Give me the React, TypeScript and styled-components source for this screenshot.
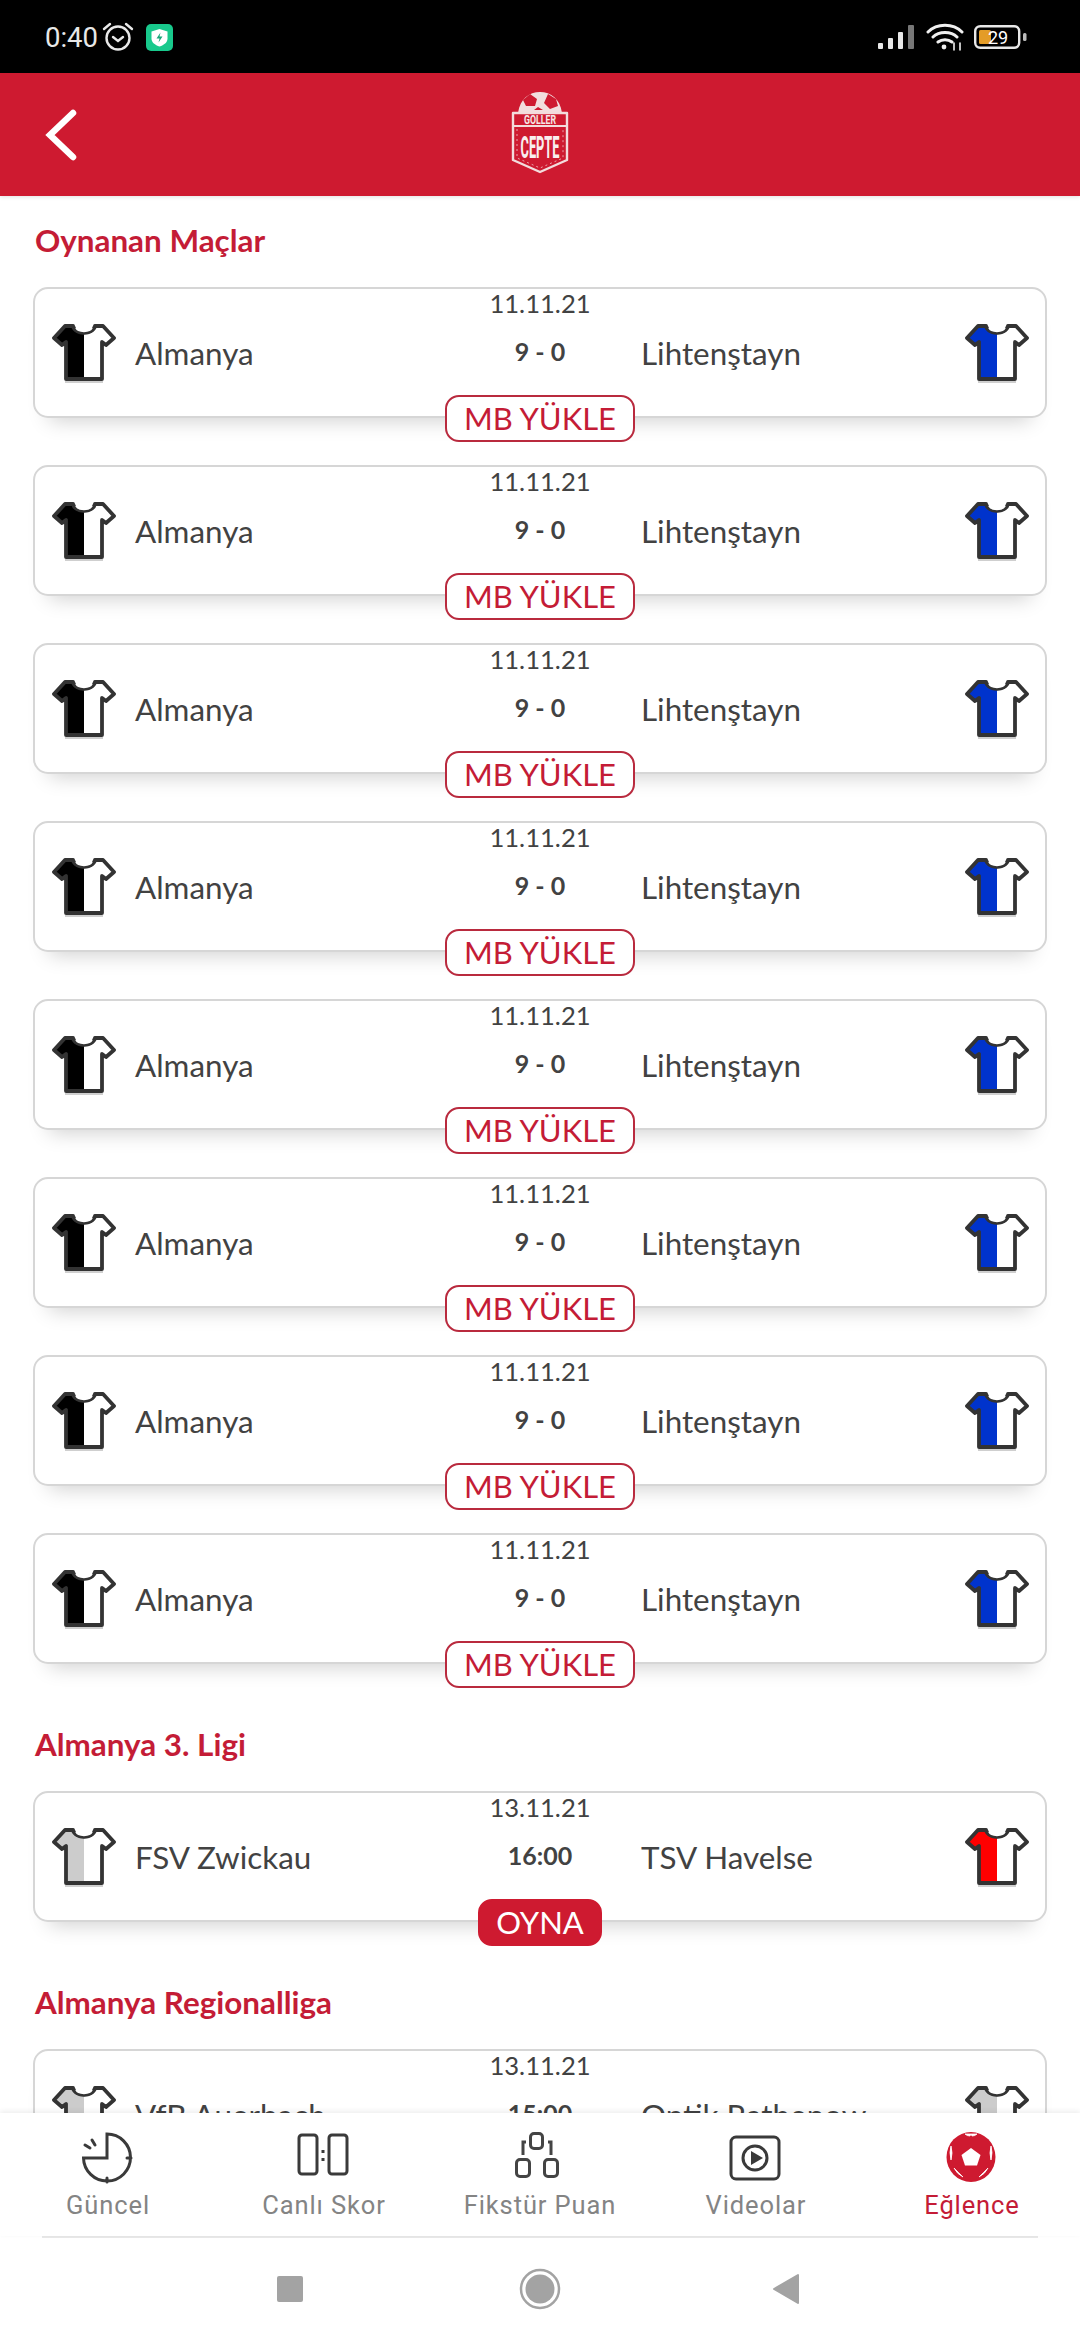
import styled, { createGlobalStyle } from "styled-components"

const RED = "#ce1a30"
const TEXT_RED = "#c41c36"
const TEXT = "#424242"

const GlobalStyle = createGlobalStyle`
	html, body {
		margin: 0;
		padding: 0;
		background: #fff;
	}
	* {
		box-sizing: border-box;
	}
`

const Page = styled.div`
	width: 1080px;
	height: 2340px;
	display: flex;
	flex-direction: column;
	overflow: hidden;
	background: #fff;
	font-family: Lato, "Liberation Sans", sans-serif;
`

const StatusBar = styled.div`
	height: 73px;
	flex: none;
	background: #000;
	display: flex;
	align-items: center;
	padding: 1px 51px 0 45px;
	color: #e8e8e8;
	font-family: Roboto, sans-serif;
	font-size: 27.5px;
`

const StatusLeft = styled.div`
	display: flex;
	align-items: center;
	flex: 1;
`

const StatusTime = styled.span`
	width: 57px;
`

const StatusRight = styled.div`
	display: flex;
	align-items: center;
	gap: 10px;
`

const ShieldBadge = styled.svg`
	margin-left: 12px;
`

const Header = styled.header`
	height: 123px;
	flex: none;
	background: ${RED};
	display: grid;
	grid-template-columns: 1fr auto 1fr;
	align-items: center;
	padding: 0 45px;
	position: relative;
	z-index: 1;
	box-shadow: 0 1px 4px rgba(0, 0, 0, 0.12);
`

const LogoMark = styled.svg`
	margin-bottom: 5px;
`

const Content = styled.main`
	flex: 1;
	min-height: 0;
	overflow: hidden;
	padding: 24px 33px 0;
`

const SectionTitle = styled.h2<{ $first?: boolean }>`
	margin: ${(p) => (p.$first ? "0" : "60px")} 0 27px 2px;
	height: 40px;
	line-height: 40px;
	font-size: 31.4px;
	font-weight: 700;
	color: ${TEXT_RED};
`

const CardList = styled.div`
	display: flex;
	flex-direction: column;
	gap: 47px;
`

const Card = styled.article`
	height: 131px;
	flex: none;
	background: #fff;
	border: 2px solid #d6d6d6;
	border-radius: 15px;
	display: flex;
	flex-direction: column;
	align-items: center;
	box-shadow: 0 18px 20px -16px rgba(0, 0, 0, 0.2);
`

const DateText = styled.div`
	height: 30px;
	line-height: 28px;
	font-size: 25.6px;
	color: ${TEXT};
`

const MatchRow = styled.div`
	width: 100%;
	height: 60px;
	margin-top: 4px;
	flex: none;
	display: grid;
	grid-template-columns: 1fr 202px 1fr;
	align-items: center;
`

const HomeTeam = styled.div`
	display: flex;
	align-items: center;
	gap: 19px;
	padding-left: 17px;
`

const AwayTeam = styled.div`
	display: flex;
	align-items: center;
	justify-content: space-between;
	padding-right: 16px;
`

const TeamName = styled.span`
	font-size: 31.4px;
	line-height: 40px;
	color: ${TEXT};
	white-space: nowrap;
`

const Score = styled.div`
	text-align: center;
	font-size: 25px;
	font-weight: 700;
	margin-bottom: 5px;
	color: ${TEXT};
`

const ActionButton = styled.div<{ $filled?: boolean }>`
	margin-top: 12px;
	margin-bottom: -26px;
	padding-bottom: 2px;
	height: 47px;
	flex: none;
	position: relative;
	display: flex;
	align-items: center;
	justify-content: center;
	border-radius: 14px;
	border: 2px solid ${(p) => (p.$filled ? RED : "#b92a3e")};
	background: ${(p) => (p.$filled ? RED : "#fff")};
	color: ${(p) => (p.$filled ? "#fff" : TEXT_RED)};
	font-size: 31px;
	width: ${(p) => (p.$filled ? "124px" : "190px")};
`

const BottomNav = styled.nav`
	height: 123px;
	flex: none;
	background: #fff;
	position: relative;
	display: grid;
	grid-template-columns: repeat(5, 216px);
	padding-top: 18px;
	box-shadow: 0 -2px 5px rgba(0, 0, 0, 0.07);
`

const NavItem = styled.div<{ $active?: boolean }>`
	display: flex;
	flex-direction: column;
	align-items: center;
	color: ${(p) => (p.$active ? TEXT_RED : "#848484")};
	font-family: Roboto, sans-serif;
	font-size: 25.5px;
	letter-spacing: 0.9px;
`

const NavIcon = styled.svg`
	width: 60px;
	height: 54px;
	flex: none;
	margin-bottom: 5px;
	margin-right: 2px;
`

const SystemBar = styled.div`
	height: 104px;
	flex: none;
	background: #fff;
	display: flex;
	align-items: center;
	justify-content: center;
	gap: 122px;
	margin: 0 42px;
	border-top: 2px solid #e8e8e8;
`

const SysSlot = styled.svg`
	width: 48px;
	height: 44px;
	margin: 0 40px;
`

const JERSEY_PATH = "M21 3H13L2 15l8 7 4-3v37h36V19l4 3 8-7L51 3h-8c-2 9-20 9-22 0Z"

const Jersey = ({ color, id }: { color: string; id: string }) => (
	<svg width="64" height="60" viewBox="0 0 64 60">
		<defs>
			<clipPath id={id}>
				<rect x="0" y="0" width="32" height="60" />
			</clipPath>
		</defs>
		<path d="M13 59h38" stroke="#cfcfcf" strokeWidth="2" />
		<path d={JERSEY_PATH} fill="#fff" />
		<path d={JERSEY_PATH} fill={color} clipPath={`url(#${id})`} />
		<path d={JERSEY_PATH} fill="none" stroke="#333" strokeWidth="3.8" strokeLinejoin="round" />
		<path d="M22 5c3 7 17 7 20 0" fill="#fff" stroke="#333" strokeWidth="2" />
	</svg>
)

const Logo = () => (
	<LogoMark width="60" height="84" viewBox="0 0 60 84">
		<path d="M8 23C10 9 19 2 30 2s20 7 22 21Z" fill="#f2dede" />
		<path d="M20 4l7 5-2 7h-9l-3-6ZM38 4l8 5 2 7-8 3-6-6ZM24 20l4-3 5 3Z" fill={RED} />
		<path d="M3 23h54v47L30 82 3 70Z" fill={RED} stroke="#f3dcdc" strokeWidth="2.4" strokeLinejoin="round" />
		<path d="M3 36h54" stroke="#f3dcdc" strokeWidth="2" />
		<path d="M7 39v29l23 10 23-10V39" fill="none" stroke="#f3dcdc" strokeWidth="1" strokeDasharray="2 3" opacity="0.7" />
		<text x="30" y="34" textAnchor="middle" fontFamily="Roboto, sans-serif" fontWeight="700" fontSize="12" textLength="32" lengthAdjust="spacingAndGlyphs" fill="#f6e6e6">
			GOLLER
		</text>
		<text x="30" y="68" textAnchor="middle" fontFamily="Roboto, sans-serif" fontWeight="700" fontSize="31" textLength="39" lengthAdjust="spacingAndGlyphs" fill="#f9eeee">
			CEPTE
		</text>
	</LogoMark>
)

const played = Array.from({ length: 8 }, (_, i) => i)

type MatchProps = {
	id: string
	date: string
	home: string
	away: string
	center: string
	homeColor: string
	awayColor: string
	filled?: boolean
	label: string
}

const Match = ({ id, date, home, away, center, homeColor, awayColor, filled, label }: MatchProps) => (
	<Card>
		<DateText>{date}</DateText>
		<MatchRow>
			<HomeTeam>
				<Jersey color={homeColor} id={`${id}-h`} />
				<TeamName>{home}</TeamName>
			</HomeTeam>
			<Score>{center}</Score>
			<AwayTeam>
				<TeamName>{away}</TeamName>
				<Jersey color={awayColor} id={`${id}-a`} />
			</AwayTeam>
		</MatchRow>
		<ActionButton $filled={filled}>{label}</ActionButton>
	</Card>
)

const App = () => {
	return (
		<Page>
			<GlobalStyle />
			<StatusBar>
				<StatusLeft>
					<StatusTime>0:40</StatusTime>
					<svg width="32" height="30" viewBox="0 0 32 30" fill="none" stroke="#e8e8e8" strokeWidth="2.4" strokeLinecap="round">
						<circle cx="16" cy="16" r="11.5" />
						<path d="M11 15l5 4 5-4M2 7l6-5M30 7l-6-5" />
					</svg>
					<ShieldBadge width="27" height="27" viewBox="0 0 27 27">
						<rect width="27" height="27" rx="5" fill="#18c98c" />
						<path d="M13.5 5l8 2.5v7c0 4-3.5 6.5-8 8-4.5-1.5-8-4-8-8v-7Z" fill="#fff" />
						<path d="M14.5 8.5l-4 6h3l-1 4 4-6h-3Z" fill="#18a67a" />
					</ShieldBadge>
				</StatusLeft>
				<StatusRight>
					<svg width="38" height="24" viewBox="0 0 38 24" fill="#e8e8e8">
						<rect x="0" y="18" width="5" height="6" rx="1" />
						<rect x="10" y="13" width="5" height="11" rx="1" />
						<rect x="20" y="7" width="5" height="17" rx="1" />
						<rect x="30" y="0" width="6" height="24" rx="1" fill="#777" />
					</svg>
					<svg width="38" height="28" viewBox="0 0 38 28" fill="none" stroke="#f0f0f0" strokeWidth="3" strokeLinecap="round">
						<path d="M2 9c9-9 25-9 34 0M7 14c6-6 18-6 24 0M12 19c4-3 10-3 14 0" />
						<circle cx="18" cy="24" r="2.4" fill="#f0f0f0" stroke="none" />
						<path d="M28 20v7M34 20v7" strokeWidth="1.6" />
					</svg>
					<svg width="55" height="24" viewBox="0 0 55 24">
						<rect x="1.2" y="1.2" width="44" height="21.6" rx="5" fill="none" stroke="#e8e8e8" strokeWidth="2.4" />
						<rect x="5" y="5" width="12" height="14" rx="1.5" fill="#e49c27" />
						<rect x="49" y="8" width="3.5" height="8" rx="1.5" fill="#bbb" />
						<text x="24" y="19" textAnchor="middle" fontFamily="Roboto, sans-serif" fontSize="18" fill="#fff">
							29
						</text>
					</svg>
				</StatusRight>
			</StatusBar>
			<Header>
				<svg width="32" height="52" viewBox="0 0 32 52" fill="none" stroke="#fff" strokeWidth="6.5" strokeLinecap="round">
					<path d="M28 4L5 26l23 22" />
				</svg>
				<Logo />
			</Header>
			<Content>
				<SectionTitle $first>Oynanan Maçlar</SectionTitle>
				<CardList>
					{played.map((i) => (
						<Match
							key={i}
							id={`p${i}`}
							date="11.11.21"
							home="Almanya"
							away="Lihtenştayn"
							center="9 - 0"
							homeColor="#000"
							awayColor="#0033cc"
							label="MB YÜKLE"
						/>
					))}
				</CardList>
				<SectionTitle>Almanya 3. Ligi</SectionTitle>
				<Match id="z" date="13.11.21" home="FSV Zwickau" away="TSV Havelse" center="16:00" homeColor="#ccc" awayColor="#f00" filled label="OYNA" />
				<SectionTitle>Almanya Regionalliga</SectionTitle>
				<Match id="r" date="13.11.21" home="VfB Auerbach" away="Optik Rathenow" center="15:00" homeColor="#ccc" awayColor="#ccc" filled label="OYNA" />
			</Content>
			<BottomNav>
				<NavItem>
					<NavIcon viewBox="0 0 60 54" fill="none" stroke="#3a3a3a" strokeWidth="3" strokeLinecap="round">
						<path d="M30 3a23.5 23.5 0 1 1-23.5 24H30ZM50 27h4M30 47v4M15 9l3 5M8 14l5 3" />
					</NavIcon>
					Güncel
				</NavItem>
				<NavItem>
					<NavIcon viewBox="0 0 60 54" fill="none" stroke="#3a3a3a" strokeWidth="3">
						<rect x="6" y="4" width="18" height="39" rx="3" />
						<rect x="36" y="4" width="18" height="39" rx="3" />
						<path d="M30 19v3M30 27v3" />
					</NavIcon>
					Canlı Skor
				</NavItem>
				<NavItem>
					<NavIcon viewBox="0 0 60 54" fill="none" stroke="#444" strokeWidth="3">
						<rect x="21.5" y="2.5" width="12" height="15" rx="3.5" />
						<rect x="7.5" y="28.5" width="13" height="17" rx="3.5" />
						<rect x="35.5" y="28.5" width="13" height="17" rx="3.5" />
						<path d="M14 24V11h3M42 24V11h-3" />
					</NavIcon>
					Fikstür Puan
				</NavItem>
				<NavItem>
					<NavIcon viewBox="0 0 60 54" fill="none" stroke="#3a3a3a" strokeWidth="3">
						<rect x="6" y="6" width="48" height="42" rx="5" />
						<circle cx="30" cy="27" r="12" />
						<path d="M26 20l12 7-12 7Z" fill="#3a3a3a" stroke="none" />
					</NavIcon>
					Videolar
				</NavItem>
				<NavItem $active>
					<NavIcon viewBox="0 0 60 54">
						<ellipse cx="30" cy="26" rx="24.5" ry="25" fill={RED} />
						<path d="M30 17l9.5 7-3.5 10.5H24L20.5 24Z" fill="#fff" />
						<path d="M24 3q2 2 5 2l1-2ZM36 3q-2 2-5 2l-1-2ZM10 15q-2 6 0 14q2-7 0-14ZM50 15q2 6 0 14q-2-7 0-14ZM13 37q3 6 9 9q-5-5-9-9ZM47 37q-3 6-9 9q5-5 9-9Z" fill="#fff" stroke="#fff" strokeWidth="0.8" />
					</NavIcon>
					Eğlence
				</NavItem>
			</BottomNav>
			<SystemBar>
				<SysSlot viewBox="0 0 48 44">
					<rect x="11" y="9" width="26" height="26" rx="2" fill="#a3a3a3" />
				</SysSlot>
				<SysSlot viewBox="0 0 48 44">
					<circle cx="24" cy="22" r="19" fill="none" stroke="#a3a3a3" strokeWidth="2.5" />
					<circle cx="24" cy="22" r="14.5" fill="#a3a3a3" />
				</SysSlot>
				<SysSlot viewBox="0 0 48 44">
					<path d="M32 8v28L8 22Z" fill="#a3a3a3" stroke="#a3a3a3" strokeWidth="2" strokeLinejoin="round" />
				</SysSlot>
			</SystemBar>
		</Page>
	)
}

export default App
